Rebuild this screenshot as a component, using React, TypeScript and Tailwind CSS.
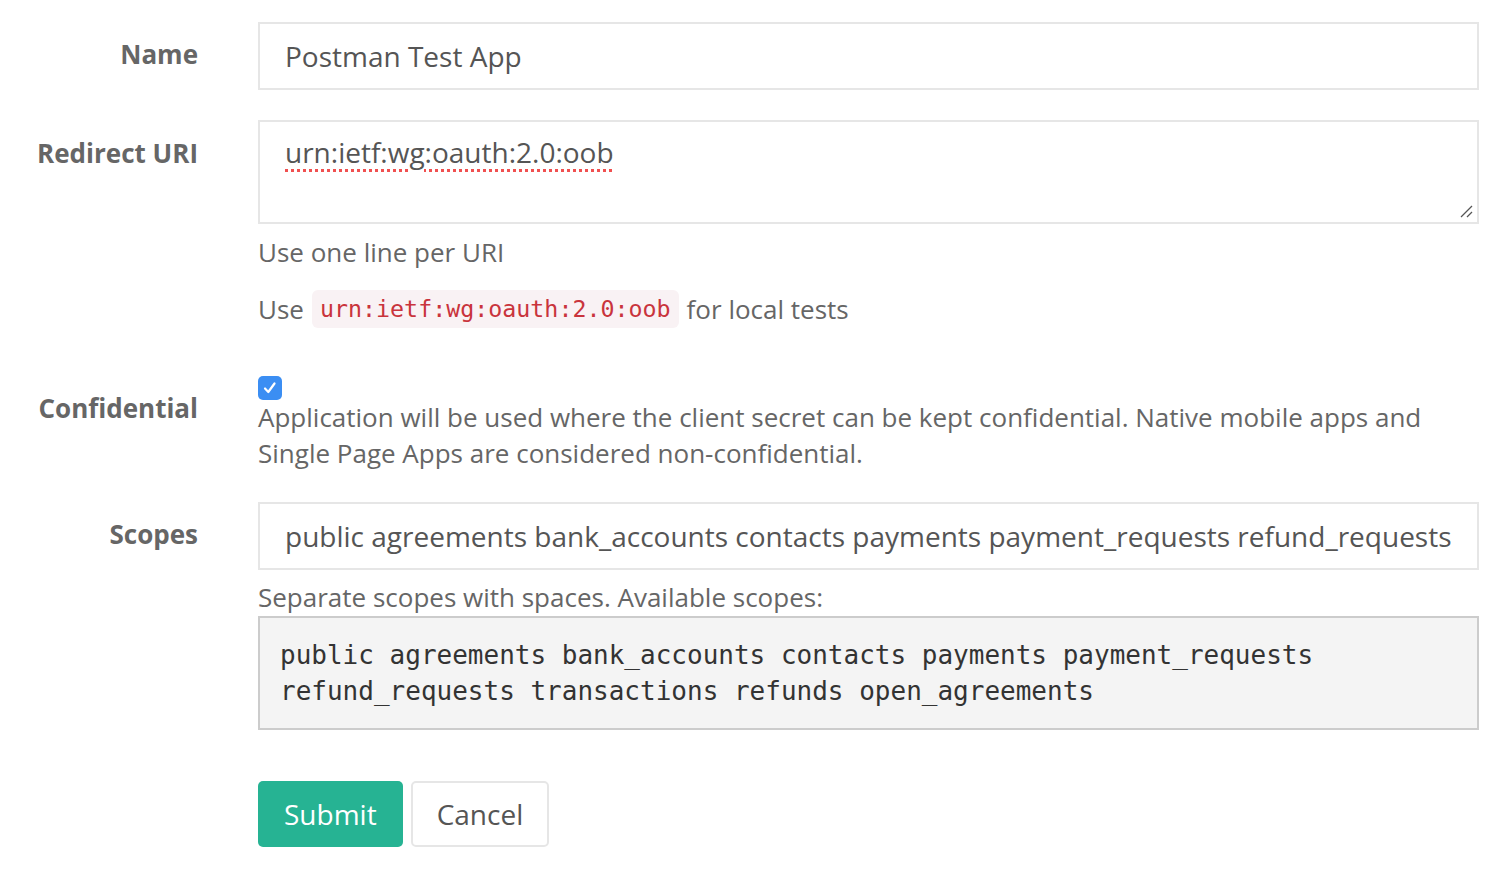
import React from "react";

const sans = { fontFamily: '"Open Sans", "Noto Sans", sans-serif' };
const mono = { fontFamily: '"DejaVu Sans Mono", "Liberation Mono", monospace' };

export default function App() {
  return (
    <div className="min-h-[874px] w-full bg-white text-[#666]" style={sans}>
      <div className="grid grid-cols-[198px_1fr] gap-x-[60px] pr-[26px] pt-[22px]">
        {/* Name */}
        <div className="flex h-[68px] items-center justify-end pb-[4px] text-[26px] font-bold text-[#666]">Name</div>
        <div className="mb-[30px]">
          <div className="flex h-[68px] items-center border-2 border-[#e6e6e6] px-[25px] text-[28px] text-[#555]">Postman Test App</div>
        </div>

        {/* Redirect URI */}
        <div className="pt-[14px] text-right text-[26px] font-bold text-[#666]">Redirect URI</div>
        <div className="mb-[38px]">
          <div className="relative h-[104px] border-2 border-[#e6e6e6] px-[25px] pt-[9px] text-[28px] text-[#555]">
            <span className="underline decoration-[#f05050] decoration-dotted decoration-[3px] underline-offset-[6px]">urn:ietf:wg:oauth:2.0:oob</span>
            <svg className="absolute bottom-[4px] right-[4px]" width="14" height="14" viewBox="0 0 14 14">
              <line x1="2" y1="13" x2="13" y2="2" stroke="#555" strokeWidth="1.3" />
              <line x1="8" y1="13" x2="13" y2="8" stroke="#555" strokeWidth="1.3" />
            </svg>
          </div>
          <div className="mt-[10px] text-[26px] leading-[36px]">Use one line per URI</div>
          <div className="mt-[20px] flex items-center text-[26px] leading-[36px]">
            <span>Use</span>
            <code className="mx-[8px] rounded-[6px] bg-[#f9f2f4] px-[8px] py-[1px] text-[23.3px] text-[#c9343c]" style={mono}>
              urn:ietf:wg:oauth:2.0:oob
            </code>
            <span>for local tests</span>
          </div>
        </div>

        {/* Confidential */}
        <div className="pt-[23px] text-right text-[26px] font-bold text-[#666]">Confidential</div>
        <div className="mb-[31px]">
          <div className="mt-[10px] flex h-[24px] w-[24px] items-center justify-center rounded-[5px] bg-[#3b8ef3]">
            <svg width="18" height="18" viewBox="0 0 18 18">
              <path d="M4 9.5 L7.3 13 L13.5 4.5" fill="none" stroke="#fff" strokeWidth="2.2" strokeLinecap="round" strokeLinejoin="round" />
            </svg>
          </div>
          <p className="mt-[-1px] text-[26px] leading-[36px]">
            Application will be used where the client secret can be kept confidential. Native mobile apps and Single Page Apps are considered non-confidential.
          </p>
        </div>

        {/* Scopes */}
        <div className="flex h-[68px] items-center justify-end pb-[4px] text-[26px] font-bold text-[#666]">Scopes</div>
        <div className="mb-[51px]">
          <div className="flex h-[68px] items-center overflow-hidden whitespace-nowrap border-2 border-[#e6e6e6] px-[25px] text-[28px] text-[#555]">
            public agreements bank_accounts contacts payments payment_requests refund_requests
          </div>
          <div className="mt-[9px] text-[26px] leading-[36px]">Separate scopes with spaces. Available scopes:</div>
          <pre
            className="mt-[1px] h-[114px] whitespace-pre-wrap border-2 border-[#cccccc] bg-[#f4f4f4] px-[20px] pt-[19px] text-[26px] leading-[36px] text-[#333]"
            style={mono}
          >
            {"public agreements bank_accounts contacts payments payment_requests\nrefund_requests transactions refunds open_agreements"}
          </pre>
        </div>

        {/* Buttons */}
        <div />
        <div className="flex gap-[8px]">
          <button className="h-[66px] rounded-[5px] bg-[#26b393] px-[26px] text-[28px] text-white">Submit</button>
          <button className="h-[66px] rounded-[5px] border-2 border-[#e6e6e6] bg-white px-[24px] text-[28px] text-[#555]">Cancel</button>
        </div>
      </div>
    </div>
  );
}
